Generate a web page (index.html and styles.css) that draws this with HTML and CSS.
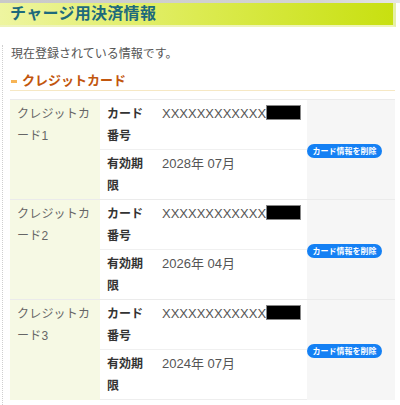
FILE: index.html
```html
<!DOCTYPE html>
<html lang="ja">
<head>
    <meta charset="UTF-8">
    <meta name="viewport" content="width=device-width, initial-scale=1.0">
    <title>チャージ用決済情報</title>
    <link rel="stylesheet" href="styles.css">
</head>
<body>

    <div class="topline"></div>
    <h1 class="page-title">チャージ用決済情報</h1>

    <div class="content">
        <p class="lead">現在登録されている情報です。</p>

        <h2 class="section-title">クレジットカード</h2>

        <table class="cards">
            <tr class="card-top">
                <td class="card-name" rowspan="2">クレジットカード1</td>
                <th>カード番号</th>
                <td class="value">XXXXXXXXXXXX<span class="mask"></span></td>
                <td class="action" rowspan="2"><button class="delete">カード情報を削除</button></td>
            </tr>
            <tr>
                <th>有効期限</th>
                <td class="value">2028年 07月</td>
            </tr>

            <tr class="card-top">
                <td class="card-name" rowspan="2">クレジットカード2</td>
                <th>カード番号</th>
                <td class="value">XXXXXXXXXXXX<span class="mask"></span></td>
                <td class="action" rowspan="2"><button class="delete">カード情報を削除</button></td>
            </tr>
            <tr>
                <th>有効期限</th>
                <td class="value">2026年 04月</td>
            </tr>

            <tr class="card-top">
                <td class="card-name" rowspan="2">クレジットカード3</td>
                <th>カード番号</th>
                <td class="value">XXXXXXXXXXXX<span class="mask"></span></td>
                <td class="action" rowspan="2"><button class="delete">カード情報を削除</button></td>
            </tr>
            <tr>
                <th>有効期限</th>
                <td class="value">2024年 07月</td>
            </tr>
        </table>
    </div>

</body>
</html>
```

FILE: styles.css
```css
body {
    margin: 0;
    font-family: "Liberation Sans", "Noto Sans CJK JP", sans-serif;
    background: #fff;
    color: #555;
}

.topline {
    height: 3px;
    background: linear-gradient(to right, #c9c9c9, #d4d4d4 80%, #e6e6e6);
}

.page-title {
    margin: 0 4px 0 0;
    height: 22px;
    padding-left: 10px;
    line-height: 22px;
    font-size: 16px;
    font-weight: bold;
    color: #1d6a7c;
    letter-spacing: 0.3px;
    background: linear-gradient(to right, #eef5a0, #dceb52 50%, #c8e010);
    border-bottom: 2px solid #eef4b9;
    border-right: 3px solid #e5efa6;
}

.content {
    margin-left: 2px;
    padding: 0 5px 0 7px;
    border-left: 1px dotted #cfcfcf;
    min-height: 380px;
}

.lead {
    margin: 18px 0 0 1px;
    font-size: 12px;
    line-height: 18px;
    color: #555;
}

.section-title {
    position: relative;
    margin: 9px 0 0;
    padding-left: 12px;
    font-size: 13px;
    line-height: 18px;
    font-weight: bold;
    color: #c2560e;
    border-bottom: 1px solid #f6e8c4;
}

.section-title::before {
    content: "";
    position: absolute;
    left: 1px;
    top: 8px;
    width: 6px;
    height: 3px;
    background: #f7b455;
}

.cards {
    width: 100%;
    margin-top: 8px;
    border-collapse: collapse;
    font-size: 12px;
    line-height: 22px;
}

.cards td,
.cards th {
    vertical-align: top;
    padding: 3px 0 2px 7px;
    border-top: 1px solid #f0f0f0;
    text-align: left;
}

.cards tr:last-child td,
.cards tr:last-child th {
    border-bottom: 1px solid #eee;
}

.cards .card-top td,
.cards .card-top th {
    border-top: 1px solid #ebebeb;
}

.card-name {
    width: 78px;
    padding-right: 5px !important;
    background: #f6f9e4;
    color: #666;
    letter-spacing: 0.2px;
}

.cards th {
    width: 42px;
    padding-right: 6px;
    font-weight: bold;
    color: #333;
}

.value {
    width: 145px;
    font-size: 13px;
    color: #555;
}

.mask {
    display: inline-block;
    width: 35px;
    height: 15px;
    background: #000;
    border: 1px solid #888;
    box-sizing: border-box;
    vertical-align: -2px;
}

.action {
    background: #f6f6f6;
    text-align: center;
    vertical-align: middle !important;
    padding: 0 !important;
}

.delete {
    width: 75px;
    height: 14px;
    padding: 0;
    border: none;
    border-radius: 8px;
    background: #1480f4;
    color: #fff;
    font-family: "Noto Sans CJK JP", sans-serif;
    font-size: 8px;
    font-weight: bold;
    line-height: 14px;
    cursor: pointer;
}
```
